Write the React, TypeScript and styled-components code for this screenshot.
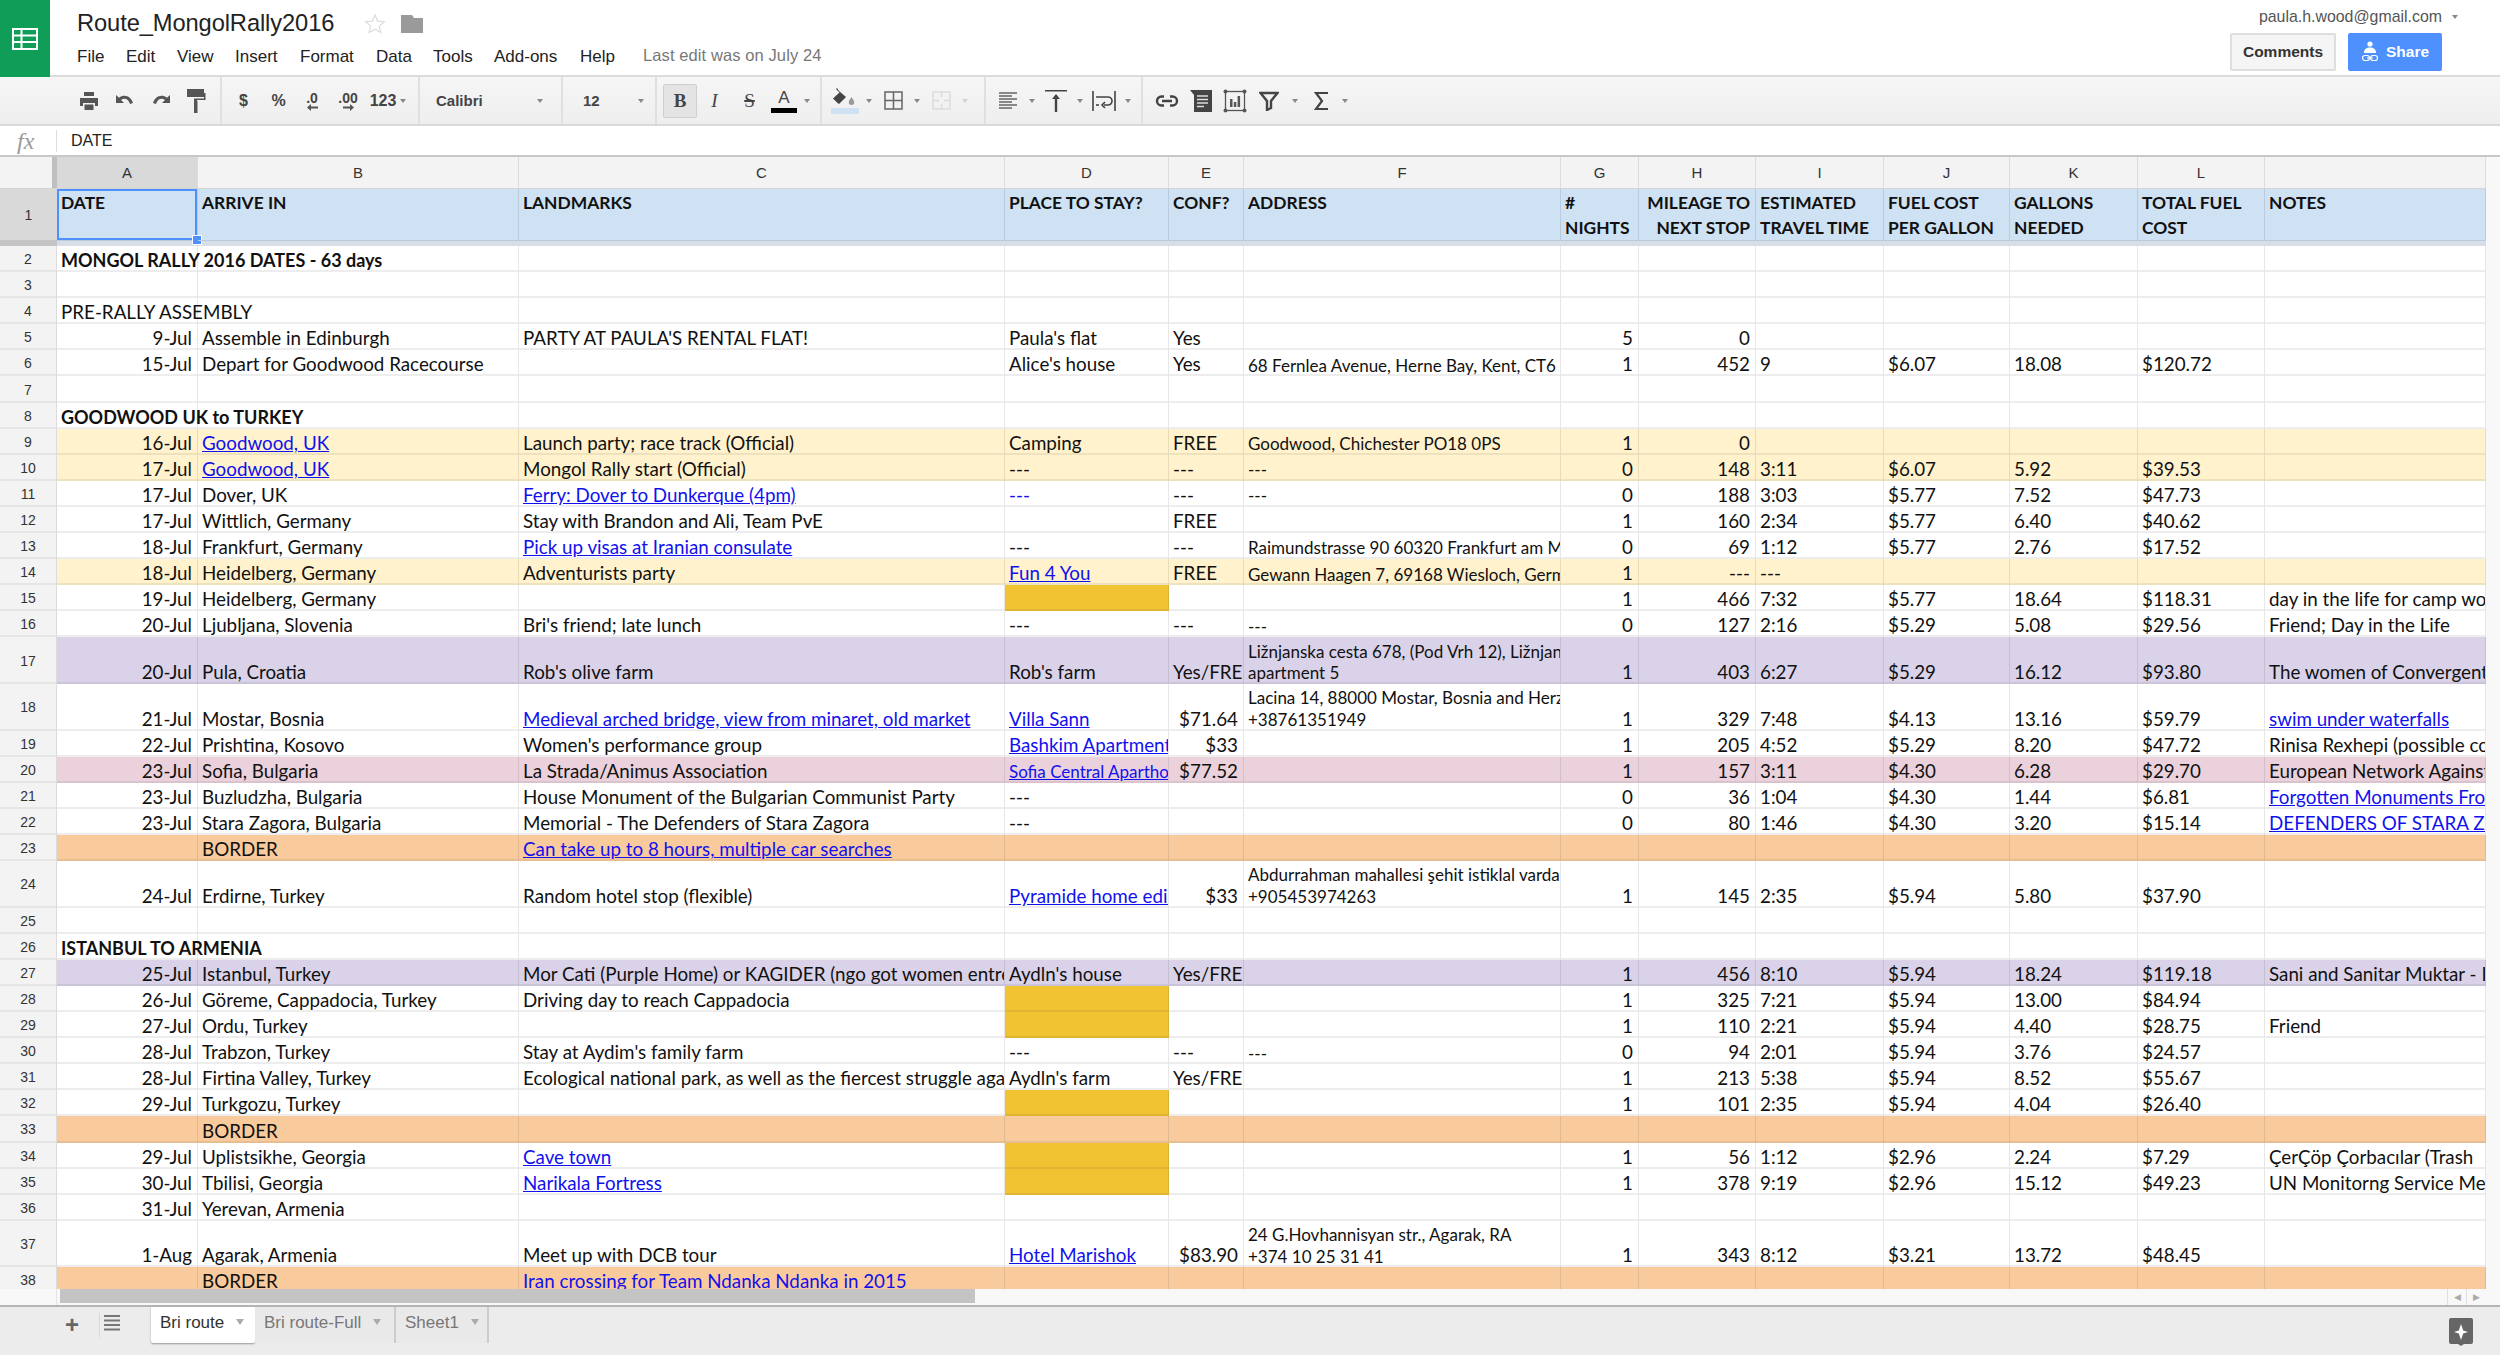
import React from "react";
import styled, { createGlobalStyle } from "styled-components";

const UI_FONT = `"Liberation Sans", Arial, sans-serif`;
const CELL_FONT = `Lato, "Noto Sans", sans-serif`;
const COLUMNS = "57px 141px 321px 486px 164px 75px 317px 78px 117px 128px 126px 128px 127px 221px";

const GlobalStyle = createGlobalStyle`
    html, body {
        margin: 0;
        padding: 0;
        background: #fff;
        overflow: hidden;
    }
`;

const Page = styled.div`
    width: 2500px;
    height: 1355px;
    display: flex;
    flex-direction: column;
    font-family: ${UI_FONT};
    color: #333;
    overflow: hidden;
`;

const TitleBar = styled.header`
    height: 77px;
    flex: none;
    display: flex;
    box-sizing: border-box;
    border-bottom: 2px solid #dcdcdc;
`;

const Logo = styled.div`
    width: 50px;
    height: 77px;
    flex: none;
    background: #0f9d58;
    display: flex;
    align-items: center;
    justify-content: center;
`;

const TitleColumn = styled.div`
    flex: 1;
    padding-left: 27px;
    display: flex;
    flex-direction: column;
`;

const TitleRow = styled.div`
    height: 47px;
    margin-bottom: -2px;
    display: flex;
    align-items: center;
`;

const DocTitle = styled.div`
    font-size: 23.7px;
    color: #222;
    letter-spacing: -0.1px;
    margin-right: 30px;
`;

const FolderGap = styled.span`
    width: 15px;
`;

const MenuRow = styled.nav`
    display: flex;
    align-items: center;
    height: 24px;
`;

const MenuItem = styled.span<{ $w: number }>`
    width: ${({ $w }) => $w}px;
    font-size: 17px;
    color: #222;
`;

const LastEdit = styled.span`
    font-size: 16.5px;
    color: #777;
    margin-top: -4px;
    letter-spacing: 0.1px;
`;

const AccountColumn = styled.div`
    width: 300px;
    padding-right: 58px;
    box-sizing: border-box;
    display: flex;
    flex-direction: column;
    align-items: flex-end;
`;

const Email = styled.div`
    height: 33px;
    display: flex;
    align-items: center;
    font-size: 15.9px;
    color: #555;
    margin-right: -17px;
    gap: 8px;
`;

const ButtonRow = styled.div`
    display: flex;
    gap: 12px;
`;

const CommentsButton = styled.div`
    width: 106px;
    height: 38px;
    box-sizing: border-box;
    background: #f5f5f5;
    border: 2px solid #dedede;
    border-radius: 2px;
    font-size: 15.5px;
    font-weight: 700;
    color: #333;
    display: flex;
    align-items: center;
    justify-content: center;
`;

const ShareButton = styled.div`
    width: 94px;
    height: 38px;
    background: #4d90fe;
    border-radius: 2px;
    font-size: 15.5px;
    font-weight: 700;
    color: #fff;
    display: flex;
    align-items: center;
    justify-content: center;
    gap: 7px;
`;

const Toolbar = styled.div`
    height: 49px;
    flex: none;
    box-sizing: border-box;
    display: flex;
    background: linear-gradient(#f6f6f6, #eeeeee);
    border-bottom: 2px solid #dadada;
`;

const ToolGroup = styled.div<{ $w?: number; $pad?: number }>`
    width: ${({ $w }) => ($w ? `${$w}px` : "auto")};
    flex: none;
    box-sizing: border-box;
    padding-left: ${({ $pad }) => $pad ?? 0}px;
    display: flex;
    align-items: center;
    border-right: ${({ $w }) => ($w ? "2px solid #e0e0e0" : "none")};
`;

const Tool = styled.div<{ $w?: number; $active?: boolean }>`
    width: ${({ $w }) => $w ?? 34}px;
    height: 34px;
    flex: none;
    box-sizing: border-box;
    display: flex;
    flex-direction: column;
    align-items: center;
    justify-content: center;
    color: #444;
    font-size: 16px;
    font-weight: 700;
    background: ${({ $active }) => ($active ? "#e4e4e4" : "transparent")};
    border: ${({ $active }) => ($active ? "1px solid #cfcfcf" : "none")};
    border-radius: 2px;
`;

const CaretCell = styled.div<{ $w?: number; $light?: boolean }>`
    width: ${({ $w }) => $w ?? 14}px;
    flex: none;
    display: flex;
    justify-content: center;
    &::after {
        content: "";
        border-left: 3.5px solid transparent;
        border-right: 3.5px solid transparent;
        border-top: 4px solid ${({ $light }) => ($light ? "#d4d4d4" : "#888")};
    }
`;

const FontLabel = styled.span<{ $w: number }>`
    width: ${({ $w }) => $w}px;
    font-size: 15px;
    font-weight: 700;
    color: #444;
`;

const Decimal = styled.span`
    font-size: 14px;
    line-height: 14px;
    margin-bottom: -1px;
`;

const SerifGlyph = styled.span<{ $italic?: boolean; $bold?: boolean }>`
    font-family: "Liberation Serif", serif;
    font-size: 19px;
    line-height: 20px;
    font-weight: ${({ $bold }) => ($bold ? 700 : 400)};
    font-style: ${({ $italic }) => ($italic ? "italic" : "normal")};
`;

const StrikeGlyph = styled.span`
    font-family: "Liberation Serif", serif;
    font-size: 19px;
    line-height: 20px;
    font-weight: 400;
    text-decoration: line-through;
    text-decoration-thickness: 2px;
`;

const ColorGlyph = styled.span`
    font-size: 17px;
    font-weight: 400;
    line-height: 17px;
`;

const ColorBar = styled.span<{ $color: string; $w: number; $h: number }>`
    width: ${({ $w }) => $w}px;
    height: ${({ $h }) => $h}px;
    background: ${({ $color }) => $color};
    margin-top: 2px;
`;

const FormulaBar = styled.div`
    height: 31px;
    flex: none;
    box-sizing: border-box;
    display: flex;
    align-items: center;
    border-bottom: 2px solid #c8c8c8;
`;

const FxLabel = styled.div`
    width: 57px;
    height: 22px;
    box-sizing: border-box;
    padding-left: 17px;
    font-family: "Liberation Serif", serif;
    font-style: italic;
    font-size: 24px;
    line-height: 22px;
    color: #999;
    border-right: 1px solid #ddd;
    flex: none;
`;

const FormulaValue = styled.div`
    padding-left: 14px;
    font-size: 16px;
    color: #222;
`;

const SheetArea = styled.div`
    flex: 1;
    min-height: 0;
    display: flex;
    background: #f8f8f8;
    overflow: hidden;
`;

const Grid = styled.div`
    width: 2486px;
    flex: none;
    background: #fff;
`;

const ColumnHeaderRow = styled.div`
    height: 32px;
    display: grid;
    grid-template-columns: ${COLUMNS};
    background: #f3f3f3;
    box-sizing: border-box;
    border-bottom: 1px solid #d4d4d4;
`;

const Corner = styled.div`
    box-sizing: border-box;
    border-right: 5px solid #bfbfbf;
`;

const ColumnHeader = styled.div<{ $selected?: boolean }>`
    display: flex;
    align-items: center;
    justify-content: center;
    font-size: 15px;
    color: #333;
    box-sizing: border-box;
    border-right: 1px solid #dcdcdc;
    background: ${({ $selected }) => ($selected ? "#d9d9d9" : "transparent")};
`;

const FrozenRow = styled.div`
    height: 51px;
    display: grid;
    grid-template-columns: ${COLUMNS};
    background: #cfe2f3;
`;

const FrozenLabel = styled.div`
    background: #d9d9d9;
    display: flex;
    align-items: center;
    justify-content: center;
    font-size: 14px;
    color: #333;
`;

const HeaderCell = styled.div<{ $right?: boolean; $selected?: boolean }>`
    position: relative;
    box-sizing: border-box;
    padding: 2px ${({ $right }) => ($right ? 5 : 2)}px 0 4px;
    font-family: ${CELL_FONT};
    font-size: 17.4px;
    font-weight: 700;
    line-height: 24.5px;
    color: #111;
    white-space: nowrap;
    text-align: ${({ $right }) => ($right ? "right" : "left")};
    border-right: 1px solid #b9cbdc;
    border-bottom: 1px solid #b9cbdc;
    ${({ $selected }) => ($selected ? "box-shadow: inset 0 0 0 2px #4d90fe;" : "")}
`;

const SelectionHandle = styled.span`
    position: absolute;
    right: -5px;
    bottom: -5px;
    width: 8px;
    height: 8px;
    background: #4d90fe;
    border: 1px solid #fff;
`;

const FreezeBar = styled.div`
    height: 6px;
    display: grid;
    grid-template-columns: 57px 1fr;
    background: #d9dde8;
`;

const FreezeCorner = styled.div`
    background: #c4c4c4;
`;

const Row = styled.div<{ $tall?: boolean; $bg?: string }>`
    height: ${({ $tall }) => ($tall ? 46.6 : 26.1)}px;
    display: grid;
    grid-template-columns: ${COLUMNS};
    background: ${({ $bg }) => $bg ?? "#fff"};
`;

const RowLabel = styled.div`
    background: #f3f3f3;
    box-sizing: border-box;
    border-right: 1px solid #dcdcdc;
    box-shadow: inset 0 -2px 0 #e6e6e6;
    display: flex;
    align-items: center;
    justify-content: center;
    font-size: 14px;
    color: #333;
`;

const Cell = styled.div<{ $right?: boolean; $over?: boolean; $bold?: boolean; $small?: boolean; $fill?: string }>`
    min-width: 0;
    box-sizing: border-box;
    padding: 0 5px 0 4px;
    display: flex;
    flex-direction: column;
    justify-content: flex-end;
    align-items: ${({ $right }) => ($right ? "flex-end" : "flex-start")};
    font-family: ${CELL_FONT};
    font-size: ${({ $small, $bold }) => ($small ? 17 : $bold ? 18 : 18.8)}px;
    font-weight: ${({ $bold }) => ($bold ? 700 : 400)};
    line-height: ${({ $small }) => ($small ? 21.7 : 24)}px;
    color: #111;
    white-space: nowrap;
    overflow: ${({ $over }) => ($over ? "visible" : "hidden")};
    background: ${({ $fill }) => $fill ?? "transparent"};
    border-right: 1px solid rgba(60, 60, 60, 0.12);
    box-shadow: inset 0 -2px 0 rgba(60, 60, 60, 0.09);
`;

const SheetLink = styled.span`
    color: #1111ee;
    text-decoration: underline;
`;

const BlueText = styled.span`
    color: #1111ee;
`;

const ScrollRow = styled.div`
    height: 16px;
    flex: none;
    display: flex;
    background: #f8f8f8;
`;

const ScrollLead = styled.div`
    width: 57px;
    flex: none;
    box-sizing: border-box;
    border-right: 1px solid #e4e4e4;
`;

const ScrollThumb = styled.div`
    width: 915px;
    height: 14px;
    margin-left: 3px;
    background: #c4c4c4;
`;

const ScrollArrows = styled.div`
    margin-left: auto;
    margin-right: 15px;
    width: 38px;
    display: flex;
    font-size: 9px;
    line-height: 16px;
    color: #aaa;
`;

const ScrollArrow = styled.span`
    flex: 1;
    text-align: center;
    border-left: 1px solid #e0e0e0;
`;

const TabBar = styled.div`
    height: 50px;
    flex: none;
    display: flex;
    align-items: flex-start;
    background: #ececec;
    border-top: 2px solid #b4b4b4;
    box-sizing: border-box;
    position: relative;
`;

const TabTools = styled.div`
    width: 151px;
    height: 36px;
    flex: none;
    display: flex;
    align-items: center;
    padding-left: 65px;
    box-sizing: border-box;
`;

const AddSheet = styled.span`
    width: 35px;
    font-size: 24px;
    font-weight: 700;
    line-height: 24px;
    color: #666;
    box-sizing: border-box;
    border-right: 1px solid #d8d8d8;
`;

const SheetList = styled.div`
    margin-left: 4px;
`;

const Tab = styled.div<{ $active?: boolean; $w: number }>`
    width: ${({ $w }) => $w}px;
    height: 36px;
    box-sizing: border-box;
    padding: 0 0 4px 9px;
    display: flex;
    align-items: center;
    gap: 12px;
    font-size: 17px;
    color: ${({ $active }) => ($active ? "#333" : "#777")};
    background: ${({ $active }) => ($active ? "#fff" : "#e9e9e9")};
    border-right: 2px solid #cccccc;
    ${({ $active }) => ($active ? "box-shadow: 0 1px 2px #999; border-radius: 0 0 2px 2px; border-right: none;" : "")}
    &::after {
        content: "";
        border-left: 4px solid transparent;
        border-right: 4px solid transparent;
        border-top: 6px solid #aaa;
        margin-top: -2px;
    }
`;

const ExploreSlot = styled.div`
    position: absolute;
    right: 27px;
    top: 11px;
`;

type CellData = {
    t?: string;
    link?: boolean;
    blue?: boolean;
    small?: boolean;
    over?: boolean;
    bold?: boolean;
    fill?: string;
    lines?: string[];
};

type RowData = { n: number; tall?: boolean; bg?: string; cells?: (string | CellData)[] };

const AMBER: CellData = { fill: "#f1c232" };
const YELLOW = "#fff2cc";
const ORANGE = "#f9cb9c";
const PURPLE = "#d9d2e9";
const PINK = "#ead1dc";

const L = (t: string): CellData => ({ t, link: true });
const S = (t: string): CellData => ({ t, small: true });
const H = (t: string): CellData => ({ t, over: true, bold: true });

const rows: RowData[] = [
    { n: 2, cells: [H("MONGOL RALLY 2016 DATES - 63 days")] },
    { n: 3 },
    { n: 4, cells: [{ t: "PRE-RALLY ASSEMBLY", over: true }] },
    { n: 5, cells: ["9-Jul", "Assemble in Edinburgh", "PARTY AT PAULA'S RENTAL FLAT!", "Paula's flat", "Yes", "", "5", "0"] },
    { n: 6, cells: ["15-Jul", "Depart for Goodwood Racecourse", "", "Alice's house", "Yes", S("68 Fernlea Avenue, Herne Bay, Kent, CT6"), "1", "452", "9", "$6.07", "18.08", "$120.72"] },
    { n: 7 },
    { n: 8, cells: [H("GOODWOOD UK to TURKEY")] },
    { n: 9, bg: YELLOW, cells: ["16-Jul", L("Goodwood, UK"), "Launch party; race track (Official)", "Camping", "FREE", S("Goodwood, Chichester PO18 0PS"), "1", "0"] },
    { n: 10, bg: YELLOW, cells: ["17-Jul", L("Goodwood, UK"), "Mongol Rally start (Official)", "---", "---", S("---"), "0", "148", "3:11", "$6.07", "5.92", "$39.53"] },
    { n: 11, cells: ["17-Jul", "Dover, UK", L("Ferry: Dover to Dunkerque (4pm)"), { t: "---", blue: true }, "---", S("---"), "0", "188", "3:03", "$5.77", "7.52", "$47.73"] },
    { n: 12, cells: ["17-Jul", "Wittlich, Germany", "Stay with Brandon and Ali, Team PvE", "", "FREE", "", "1", "160", "2:34", "$5.77", "6.40", "$40.62"] },
    { n: 13, cells: ["18-Jul", "Frankfurt, Germany", L("Pick up visas at Iranian consulate"), "---", "---", S("Raimundstrasse 90 60320 Frankfurt am Main"), "0", "69", "1:12", "$5.77", "2.76", "$17.52"] },
    { n: 14, bg: YELLOW, cells: ["18-Jul", "Heidelberg, Germany", "Adventurists party", L("Fun 4 You"), "FREE", S("Gewann Haagen 7, 69168 Wiesloch, Germany"), "1", "---", "---"] },
    { n: 15, cells: ["19-Jul", "Heidelberg, Germany", "", AMBER, "", "", "1", "466", "7:32", "$5.77", "18.64", "$118.31", "day in the life for camp work"] },
    { n: 16, cells: ["20-Jul", "Ljubljana, Slovenia", "Bri's friend; late lunch", "---", "---", S("---"), "0", "127", "2:16", "$5.29", "5.08", "$29.56", "Friend; Day in the Life"] },
    { n: 17, tall: true, bg: PURPLE, cells: ["20-Jul", "Pula, Croatia", "Rob's olive farm", "Rob's farm", "Yes/FREE", { small: true, lines: ["Ližnjanska cesta 678, (Pod Vrh 12), Ližnjan", "apartment 5"] }, "1", "403", "6:27", "$5.29", "16.12", "$93.80", "The women of Convergent Media"] },
    { n: 18, tall: true, cells: ["21-Jul", "Mostar, Bosnia", L("Medieval arched bridge, view from minaret, old market"), L("Villa Sann"), "$71.64", { small: true, lines: ["Lacina 14, 88000 Mostar, Bosnia and Herzegovina", "+38761351949"] }, "1", "329", "7:48", "$4.13", "13.16", "$59.79", L("swim under waterfalls")] },
    { n: 19, cells: ["22-Jul", "Prishtina, Kosovo", "Women's performance group", L("Bashkim Apartment"), "$33", "", "1", "205", "4:52", "$5.29", "8.20", "$47.72", "Rinisa Rexhepi (possible contact)"] },
    { n: 20, bg: PINK, cells: ["23-Jul", "Sofia, Bulgaria", "La Strada/Animus Association", { t: "Sofia Central Aparthotel", link: true, small: true }, "$77.52", "", "1", "157", "3:11", "$4.30", "6.28", "$29.70", "European Network Against"] },
    { n: 21, cells: ["23-Jul", "Buzludzha, Bulgaria", "House Monument of the Bulgarian Communist Party", "---", "", "", "0", "36", "1:04", "$4.30", "1.44", "$6.81", L("Forgotten Monuments From")] },
    { n: 22, cells: ["23-Jul", "Stara Zagora, Bulgaria", "Memorial - The Defenders of Stara Zagora", "---", "", "", "0", "80", "1:46", "$4.30", "3.20", "$15.14", L("DEFENDERS OF STARA ZAGORA")] },
    { n: 23, bg: ORANGE, cells: ["", "BORDER", L("Can take up to 8 hours, multiple car searches")] },
    { n: 24, tall: true, cells: ["24-Jul", "Erdirne, Turkey", "Random hotel stop (flexible)", L("Pyramide home edirne"), "$33", { small: true, lines: ["Abdurrahman mahallesi şehit istiklal vardar", "+905453974263"] }, "1", "145", "2:35", "$5.94", "5.80", "$37.90"] },
    { n: 25 },
    { n: 26, cells: [H("ISTANBUL TO ARMENIA")] },
    { n: 27, bg: PURPLE, cells: ["25-Jul", "Istanbul, Turkey", "Mor Cati (Purple Home) or KAGIDER (ngo got women entrepreneurs)", "Aydln's house", "Yes/FREE", "", "1", "456", "8:10", "$5.94", "18.24", "$119.18", "Sani and Sanitar Muktar - Iran"] },
    { n: 28, cells: ["26-Jul", "Göreme, Cappadocia, Turkey", "Driving day to reach Cappadocia", AMBER, "", "", "1", "325", "7:21", "$5.94", "13.00", "$84.94"] },
    { n: 29, cells: ["27-Jul", "Ordu, Turkey", "", AMBER, "", "", "1", "110", "2:21", "$5.94", "4.40", "$28.75", "Friend"] },
    { n: 30, cells: ["28-Jul", "Trabzon, Turkey", "Stay at Aydim's family farm", "---", "---", S("---"), "0", "94", "2:01", "$5.94", "3.76", "$24.57"] },
    { n: 31, cells: ["28-Jul", "Firtina Valley, Turkey", "Ecological national park, as well as the fiercest struggle against", "Aydln's farm", "Yes/FREE", "", "1", "213", "5:38", "$5.94", "8.52", "$55.67"] },
    { n: 32, cells: ["29-Jul", "Turkgozu, Turkey", "", AMBER, "", "", "1", "101", "2:35", "$5.94", "4.04", "$26.40"] },
    { n: 33, bg: ORANGE, cells: ["", "BORDER"] },
    { n: 34, cells: ["29-Jul", "Uplistsikhe, Georgia", L("Cave town"), AMBER, "", "", "1", "56", "1:12", "$2.96", "2.24", "$7.29", "ÇerÇöp Çorbacılar (Trash"] },
    { n: 35, cells: ["30-Jul", "Tbilisi, Georgia", L("Narikala Fortress"), AMBER, "", "", "1", "378", "9:19", "$2.96", "15.12", "$49.23", "UN Monitorng Service Merkezi"] },
    { n: 36, cells: ["31-Jul", "Yerevan, Armenia"] },
    { n: 37, tall: true, cells: ["1-Aug", "Agarak, Armenia", "Meet up with DCB tour", L("Hotel Marishok "), "$83.90", { small: true, lines: ["24 G.Hovhannisyan str., Agarak, RA", "+374 10 25 31 41"] }, "1", "343", "8:12", "$3.21", "13.72", "$48.45"] },
    { n: 38, bg: ORANGE, cells: ["", "BORDER", L("Iran crossing for Team Ndanka Ndanka in 2015")] },
];

const COLUMN_NAMES = ["A", "B", "C", "D", "E", "F", "G", "H", "I", "J", "K", "L", ""];

const HEADERS: { lines: string[]; right?: boolean }[] = [
    { lines: ["DATE"] },
    { lines: ["ARRIVE IN"] },
    { lines: ["LANDMARKS"] },
    { lines: ["PLACE TO STAY?"] },
    { lines: ["CONF?"] },
    { lines: ["ADDRESS"] },
    { lines: ["#", "NIGHTS"] },
    { lines: ["MILEAGE TO", "NEXT STOP"], right: true },
    { lines: ["ESTIMATED", "TRAVEL TIME"] },
    { lines: ["FUEL COST", "PER GALLON"] },
    { lines: ["GALLONS", "NEEDED"] },
    { lines: ["TOTAL FUEL", "COST"] },
    { lines: ["NOTES"] },
];

const isRight = (col: number, text: string) =>
    col === 0 || col === 6 || col === 7 || (col === 4 && text.startsWith("$"));

const CellBody = ({ cell }: { cell: CellData }) => {
    if (cell.lines) return <>{cell.lines.map((line) => <span key={line}>{line}</span>)}</>;
    if (!cell.t) return null;
    if (cell.link) return <SheetLink>{cell.t}</SheetLink>;
    if (cell.blue) return <BlueText>{cell.t}</BlueText>;
    return <span>{cell.t}</span>;
};

const SheetCell = ({ col, data }: { col: number; data?: string | CellData }) => {
    const cell: CellData = typeof data === "string" ? { t: data } : data ?? {};
    return (
        <Cell $right={!cell.over && isRight(col, cell.t ?? "")} $over={cell.over} $bold={cell.bold} $small={cell.small} $fill={cell.fill}>
            <CellBody cell={cell} />
        </Cell>
    );
};

const SheetsLogo = () => (
    <svg width="26" height="22" viewBox="0 0 26 22" fill="none" stroke="#fff" strokeWidth="2">
        <rect x="1" y="1" width="24" height="20" />
        <path d="M1 7.5h24M1 14h24M9.5 1v20" />
    </svg>
);

const StarIcon = () => (
    <svg width="22" height="22" viewBox="0 0 22 22" fill="none" stroke="#dcdcdc" strokeWidth="1.2">
        <path d="M11 2l2.7 6.1 6.6.6-5 4.4 1.5 6.5L11 16.2l-5.8 3.4 1.5-6.5-5-4.4 6.6-.6z" />
    </svg>
);

const FolderIcon = () => (
    <svg width="22" height="18" viewBox="0 0 22 18" fill="#9a9a9a">
        <path d="M0 0h11l2 3h9v15H0z" />
    </svg>
);

const ShareIcon = () => (
    <svg width="18" height="22" viewBox="0 0 18 22" fill="#fff">
        <circle cx="9" cy="3" r="2.6" />
        <path d="M3 12c0-4 2.5-5.5 6-5.5s6 1.5 6 5.5z" />
        <rect x="1.5" y="14.5" width="7" height="5" rx="2.5" fill="none" stroke="#fff" strokeWidth="1.2" />
        <rect x="9.5" y="14.5" width="7" height="5" rx="2.5" fill="none" stroke="#fff" strokeWidth="1.2" />
        <path d="M6 17h6" stroke="#fff" strokeWidth="1.2" />
    </svg>
);

const PrintIcon = () => (
    <svg width="20" height="20" viewBox="0 0 20 20" fill="#555">
        <path d="M5 1h10v4H5zM1 7h18v8h-3v-3H4v3H1z" />
        <path d="M5.5 13.5h9V19h-9z" />
    </svg>
);

const UndoIcon = ({ flip }: { flip?: boolean }) => (
    <svg width="20" height="16" viewBox="0 0 20 16" fill="#555" transform={flip ? "scale(-1 1)" : undefined}>
        <path d="M1 2v8h8L6 7c3.5-2.5 7.5-1 9 4l3-1C16 3.5 9.5 0.5 4 4.8z" />
    </svg>
);

const PaintIcon = () => (
    <svg width="20" height="26" viewBox="0 0 20 26" fill="#555">
        <path d="M1 1h17v8H1z" />
        <path d="M18 5h1.5v7H11v2H8v-3.5h10z" />
        <path d="M8 13h3.5v12H8z" />
    </svg>
);

const ArrowIcon = ({ left }: { left?: boolean }) => (
    <svg width="11" height="7" viewBox="0 0 11 7" fill="#555" transform={left ? "scale(-1 1)" : undefined}>
        <path d="M0 2.5h7V0l4 3.5L7 7V4.5H0z" />
    </svg>
);

const FillIcon = () => (
    <svg width="24" height="18" viewBox="0 0 24 18" fill="#444">
        <path d="M4 0l2 3 7 6-6.5 6.5a1 1 0 0 1-1.4 0L0 10.5 6.5 4.5 3 1z" />
        <path d="M18.5 9c2 3 2.7 4 2.7 5.3a2.7 2.7 0 0 1-5.4 0c0-1.3.7-2.3 2.7-5.3z" fill="#999" />
    </svg>
);

const BordersIcon = ({ faded }: { faded?: boolean }) => (
    <svg width="19" height="19" viewBox="0 0 19 19" fill="none" stroke={faded ? "#dcdcdc" : "#666"} strokeWidth="1.5">
        <rect x="1" y="1" width="17" height="17" />
        <path d={faded ? "M9.5 1v5M9.5 13v5M1 9.5h6M18 9.5h-6" : "M9.5 1v17M1 9.5h17"} />
    </svg>
);

const AlignIcon = () => (
    <svg width="19" height="20" viewBox="0 0 19 20" stroke="#666" strokeWidth="1.6">
        <path d="M0 2h18M0 5h13M0 8h18M0 11h13M0 14h18M0 17h13" />
    </svg>
);

const ValignIcon = () => (
    <svg width="22" height="24" viewBox="0 0 22 24" fill="#444">
        <path d="M0 1h22v1.5H0z" />
        <path d="M11 5l4 5h-2.8v13H9.8V10H7z" />
    </svg>
);

const WrapIcon = () => (
    <svg width="24" height="22" viewBox="0 0 24 22" fill="none" stroke="#444" strokeWidth="1.6">
        <path d="M1 1v20M23 1v20" />
        <path d="M4 7h12a3.5 3.5 0 0 1 0 8h-4" />
        <path d="M13 12l-3 3 3 3" />
        <path d="M4 15h3" />
    </svg>
);

const LinkIcon = () => (
    <svg width="24" height="14" viewBox="0 0 24 14" fill="none" stroke="#444" strokeWidth="2.4">
        <path d="M9 2.5H6.5a4.500 4.500 0 0 0 0 9H9M15 2.500h2.500a4.500 4.500 0 0 1 0 9H15M7 7h10" />
    </svg>
);

const NoteIcon = () => (
    <svg width="22" height="22" viewBox="0 0 22 22" fill="#444">
        <path d="M0 0h22v22H4V5z" />
        <path d="M7 6h11M7 9.5h11M7 13h11M7 16.5h7" stroke="#ddd" strokeWidth="1.3" />
    </svg>
);

const ChartIcon = () => (
    <svg width="24" height="24" viewBox="0 0 24 24" fill="#555" stroke="none">
        <rect x="2.5" y="2.5" width="19" height="19" fill="none" stroke="#555" strokeWidth="1.3" />
        <circle cx="2.5" cy="2.5" r="2" />
        <circle cx="21.5" cy="2.5" r="2" />
        <circle cx="2.5" cy="21.5" r="2" />
        <circle cx="21.5" cy="21.5" r="2" />
        <path d="M7 10h2.500v8H7zM10.800 13h2.500v5h-2.500zM14.600 7h2.500v11h-2.500z" />
    </svg>
);

const FilterIcon = () => (
    <svg width="20" height="20" viewBox="0 0 20 20" fill="none" stroke="#444" strokeWidth="2.4">
        <path d="M1.500 2h17L12 10v7l-4 2v-9z" />
    </svg>
);

const SumIcon = () => (
    <svg width="14" height="20" viewBox="0 0 14 20" fill="none" stroke="#444" strokeWidth="2.2">
        <path d="M14 2H2l6 8-6 8h12" />
    </svg>
);

const ListIcon = () => (
    <svg width="16" height="18" viewBox="0 0 16 18" stroke="#777" strokeWidth="2">
        <path d="M0 2h16M0 6.500h16M0 11h16M0 15.500h16" />
    </svg>
);

const ExploreIcon = () => (
    <svg width="24" height="28" viewBox="0 0 24 28">
        <path d="M2 0h20a2 2 0 0 1 2 2v22a2 2 0 0 1-2 2h-7l-3 2-3-2H2a2 2 0 0 1-2-2V2a2 2 0 0 1 2-2z" fill="#666" />
        <path d="M12 6l2.200 6.500L19 14l-4.800 1.500L12 22l-2.200-6.500L5 14l4.800-1.500z" fill="#fff" />
    </svg>
);

const App = () => {
    return (
        <Page>
            <GlobalStyle />
            <TitleBar>
                <Logo>
                    <SheetsLogo />
                </Logo>
                <TitleColumn>
                    <TitleRow>
                        <DocTitle>Route_MongolRally2016</DocTitle>
                        <StarIcon />
                        <FolderGap />
                        <FolderIcon />
                    </TitleRow>
                    <MenuRow>
                        <MenuItem $w={49}>File</MenuItem>
                        <MenuItem $w={51}>Edit</MenuItem>
                        <MenuItem $w={58}>View</MenuItem>
                        <MenuItem $w={65}>Insert</MenuItem>
                        <MenuItem $w={76}>Format</MenuItem>
                        <MenuItem $w={57}>Data</MenuItem>
                        <MenuItem $w={61}>Tools</MenuItem>
                        <MenuItem $w={86}>Add-ons</MenuItem>
                        <MenuItem $w={63}>Help</MenuItem>
                        <LastEdit>Last edit was on July 24</LastEdit>
                    </MenuRow>
                </TitleColumn>
                <AccountColumn>
                    <Email>
                        paula.h.wood@gmail.com
                        <CaretCell $w={9} />
                    </Email>
                    <ButtonRow>
                        <CommentsButton>Comments</CommentsButton>
                        <ShareButton>
                            <ShareIcon />
                            Share
                        </ShareButton>
                    </ButtonRow>
                </AccountColumn>
            </TitleBar>
            <Toolbar>
                <ToolGroup $w={222} $pad={71}>
                    <Tool $w={36}><PrintIcon /></Tool>
                    <Tool $w={36}><UndoIcon /></Tool>
                    <Tool $w={36}><UndoIcon flip /></Tool>
                    <Tool $w={34}><PaintIcon /></Tool>
                </ToolGroup>
                <ToolGroup $w={198} $pad={4}>
                    <Tool $w={35}>$</Tool>
                    <Tool $w={35}>%</Tool>
                    <Tool $w={32}><Decimal>.0</Decimal><ArrowIcon left /></Tool>
                    <Tool $w={40}><Decimal>.00</Decimal><ArrowIcon /></Tool>
                    <Tool $w={30}>123</Tool>
                    <CaretCell $w={10} />
                </ToolGroup>
                <ToolGroup $w={143} $pad={16}>
                    <FontLabel $w={99}>Calibri</FontLabel>
                    <CaretCell $w={10} />
                </ToolGroup>
                <ToolGroup $w={94} $pad={20}>
                    <FontLabel $w={53}>12</FontLabel>
                    <CaretCell $w={10} />
                </ToolGroup>
                <ToolGroup $w={165} $pad={6}>
                    <Tool $active><SerifGlyph $bold>B</SerifGlyph></Tool>
                    <Tool $w={35}><SerifGlyph $italic>I</SerifGlyph></Tool>
                    <Tool $w={35}><StrikeGlyph>S</StrikeGlyph></Tool>
                    <Tool $w={34}>
                        <ColorGlyph>A</ColorGlyph>
                        <ColorBar $color="#000" $w={26} $h={5} />
                    </Tool>
                    <CaretCell $w={12} />
                </ToolGroup>
                <ToolGroup $w={164} $pad={6}>
                    <Tool>
                        <FillIcon />
                        <ColorBar $color="#cfe2f3" $w={28} $h={6} />
                    </Tool>
                    <CaretCell />
                    <Tool><BordersIcon /></Tool>
                    <CaretCell />
                    <Tool><BordersIcon faded /></Tool>
                    <CaretCell $light />
                </ToolGroup>
                <ToolGroup $w={157} $pad={5}>
                    <Tool><AlignIcon /></Tool>
                    <CaretCell />
                    <Tool><ValignIcon /></Tool>
                    <CaretCell />
                    <Tool><WrapIcon /></Tool>
                    <CaretCell />
                </ToolGroup>
                <ToolGroup $pad={7}>
                    <Tool><LinkIcon /></Tool>
                    <Tool><NoteIcon /></Tool>
                    <Tool><ChartIcon /></Tool>
                    <Tool><FilterIcon /></Tool>
                    <CaretCell $w={18} />
                    <Tool><SumIcon /></Tool>
                    <CaretCell />
                </ToolGroup>
            </Toolbar>
            <FormulaBar>
                <FxLabel>fx</FxLabel>
                <FormulaValue>DATE</FormulaValue>
            </FormulaBar>
            <SheetArea>
                <Grid>
                    <ColumnHeaderRow>
                        <Corner />
                        {COLUMN_NAMES.map((name, i) => (
                            <ColumnHeader key={i} $selected={i === 0}>{name}</ColumnHeader>
                        ))}
                    </ColumnHeaderRow>
                    <FrozenRow>
                        <FrozenLabel>1</FrozenLabel>
                        {HEADERS.map((header, i) => (
                            <HeaderCell key={i} $right={header.right} $selected={i === 0}>
                                {header.lines.map((line) => (
                                    <div key={line}>{line}</div>
                                ))}
                                {i === 0 && <SelectionHandle />}
                            </HeaderCell>
                        ))}
                    </FrozenRow>
                    <FreezeBar>
                        <FreezeCorner />
                    </FreezeBar>
                    {rows.map((row) => (
                        <Row key={row.n} $tall={row.tall} $bg={row.bg}>
                            <RowLabel>{row.n}</RowLabel>
                            {COLUMN_NAMES.map((_, col) => (
                                <SheetCell key={col} col={col} data={row.cells?.[col]} />
                            ))}
                        </Row>
                    ))}
                </Grid>
            </SheetArea>
            <ScrollRow>
                <ScrollLead />
                <ScrollThumb />
                <ScrollArrows>
                    <ScrollArrow>◀</ScrollArrow>
                    <ScrollArrow>▶</ScrollArrow>
                </ScrollArrows>
            </ScrollRow>
            <TabBar>
                <TabTools>
                    <AddSheet>+</AddSheet>
                    <SheetList><ListIcon /></SheetList>
                </TabTools>
                <Tab $active $w={104}>Bri route</Tab>
                <Tab $w={141}>Bri route-Full</Tab>
                <Tab $w={93}>Sheet1</Tab>
                <ExploreSlot>
                    <ExploreIcon />
                </ExploreSlot>
            </TabBar>
        </Page>
    );
};

export default App;
